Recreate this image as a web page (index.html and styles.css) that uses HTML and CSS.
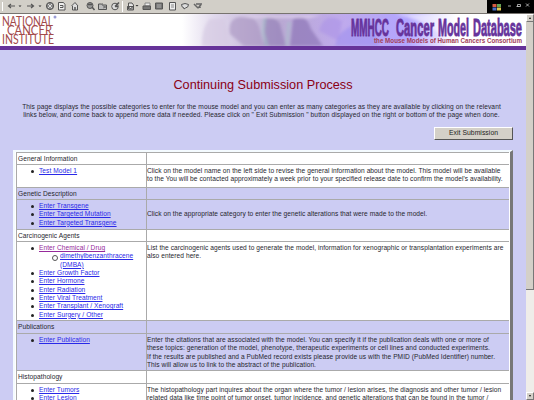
FILE: index.html
```html
<!DOCTYPE html>
<html lang="en">
<head>
<meta charset="utf-8">
<title>Continuing Submission Process</title>
<link rel="stylesheet" href="styles.css">
</head>
<body>
<div class="toolbar">
  <svg class="tools" width="210" height="13" viewBox="0 0 210 13" fill="none" stroke="#555" stroke-width="1">
    <path d="M2.500 2v9" stroke="#fff"/><path d="M15 6H8.500M11 4L8.500 6 11 8" stroke-width="1.200"/>
    <path d="M18.500 5.500h3L20 7zM38.500 5.500h3L40 7zM135.500 5h3L137 6.500z" fill="#333" stroke="none"/>
    <path d="M27 6h6.500M31 4l2.500 2L31 8" stroke-width="1.200"/>
    <circle cx="50" cy="6" r="3.600" fill="#888"/><path d="M48 4l4 4M52 4l-4 4" stroke="#ddd"/>
    <path d="M58.500 2.500h5l1.500 2V10h-6.500z" fill="#eee"/><path d="M60 5.500h3v2h-3"/>
    <path d="M71.500 6L75 2.500 78 6M72.500 6v4h5V6" fill="#ddd"/><path d="M75 10V7" stroke-width="1.500"/>
    <circle cx="90" cy="5.500" r="3" fill="#999"/><path d="M88 4.500h4M92 7l2.500 3" stroke-width="1.500"/>
    <path d="M98.500 4h3l1 1h4v4.500h-8z" fill="#bbb"/><path d="M102 3l1 3 3 1-3 1" stroke="#777"/>
    <circle cx="115" cy="6.500" r="3.300" fill="#ddd"/><path d="M115 6.500l4-4M115 6.500h3" stroke-width="1.600"/>
    <path d="M122.500 1v11" stroke="#fff"/>
    <path d="M128.500 3h3.500l1.500 2v4h-5zM127.500 6.500h6v3.500h-6z" fill="#e4e4e4"/><path d="M127.500 6.500l3 2 3-2"/>
    <path d="M145 3h5v3h-5z" fill="#eee" stroke="#888"/><path d="M143 6h7.500v3.500H143z" fill="#777"/>
    <path d="M155.500 3h7v6h-7z" fill="#777"/><path d="M157 5h4M157 7h4" stroke="#aaa"/>
    <path d="M169.500 2.500h6V10h-6z" fill="#eee"/><path d="M171 5h3M171 7h3" stroke="#888"/>
    <path d="M181.500 4.500q3.500-2 7 0 0 3-3 3.500l-1.500 1V8q-2.500-.5-2.500-3.500z" fill="#ddd"/>
    <path d="M194 4l4 4M196 4h6M198 8l3-3M200 5v3" stroke="#666" stroke-width="1.500"/>
  </svg>
  <svg class="window" width="47" height="13" viewBox="0 0 47 13" fill="none" stroke="#ccc">
    <path d="M5.500 4h4v3h-4z" fill="#d75c43" stroke="none"/><path d="M10 4h4v3h-4z" fill="#66a455" stroke="none"/>
    <path d="M5.500 7.500h4v3h-4z" fill="#4b70c8" stroke="none"/><path d="M10 7.500h4v3h-4z" fill="#e2c94f" stroke="none"/>
    <path d="M21 6h3M30.500 4.500h3v2h-3zM29.500 6.500h2M39 3.500l3 3M42 3.500l-3 3" stroke-width=".8"/>
  </svg>
</div>
<div class="view">
  <div class="page">
    <svg class="banner" width="526" height="32" viewBox="0 0 526 32">
      <defs>
        <linearGradient id="wash"><stop offset="0" stop-color="#fff"/><stop offset=".12" stop-color="#e0d8ec"/><stop offset=".35" stop-color="#b9a9d2"/><stop offset=".58" stop-color="#bfaaec"/><stop offset=".82" stop-color="#b2a5ff"/><stop offset="1" stop-color="#fff"/></linearGradient>
        <filter id="soft"><feGaussianBlur stdDeviation="1.8"/></filter>
      </defs>
      <path d="M0 0h526v32H0z" fill="#fff"/>
      <path d="M182 0h275v32H182z" fill="url(#wash)"/>
      <g filter="url(#soft)">
        <path d="M202 32q0-20 8-27h15l5 27z" fill="#d6cae2" opacity=".7"/>
        <path d="M230 20q-3-17 14-18 13 0 16 14l4 16h-20z" fill="#a792bf" opacity=".6"/>
        <path d="M264 4q10-3 16 6l6 22h-22z" fill="#8f79b4" opacity=".6"/>
        <path d="M290 32l3-27q13-7 18 10l12 17z" fill="#8b72b4" opacity=".65"/>
        <path d="M319 17q5-20 23-10l-3 20z" fill="#a890e8" opacity=".5"/>
        <path d="M265 3l-2 15 4 14M289 8l-2 24" fill="none" stroke="#a6c3c9" stroke-width="3" opacity=".6"/>
        <path d="M335 32q5-23 38-25l6 25z" fill="#9488f0" opacity=".45"/>
        <path d="M395 0h131v32h-80q-5-22-51-32z" fill="#fff" opacity=".5"/>
        <path d="M232 1h90L310 4h-60z" fill="#e4d7f1" opacity=".7"/>
      </g>
      <g class="nci" fill="#a34a4a">
        <text x="2" y="11.500" textLength="51" lengthAdjust="spacingAndGlyphs">NATIONAL</text>
        <text x="7" y="20.700" textLength="45" lengthAdjust="spacingAndGlyphs">CANCER</text>
        <text x="2" y="30" textLength="52" lengthAdjust="spacingAndGlyphs">INSTITUTE</text>
      </g>
      <circle cx="55" cy="3" r="1.500" fill="#9a9cd4"/>
      <g class="brand" fill="#66339b" stroke="#66339b">
        <text x="351" y="21.500" textLength="38" lengthAdjust="spacingAndGlyphs">MMHCC</text>
        <text x="396" y="21.500" textLength="38" lengthAdjust="spacingAndGlyphs">Cancer</text>
        <text x="438" y="21.500" textLength="31" lengthAdjust="spacingAndGlyphs">Model</text>
        <text x="473" y="21.500" textLength="49" lengthAdjust="spacingAndGlyphs">Database</text>
      </g>
      <text class="tag" x="374" y="29" textLength="148" lengthAdjust="spacingAndGlyphs">the Mouse Models of Human Cancers Consortium</text>
    </svg>
    <div class="rule"></div>
    <h1>Continuing Submission Process</h1>
    <p class="intro">This page displays the possible categories to enter for the mouse model and you can enter as many categories as they are available by clicking on the relevant<br>links below, and come back to append more data if needed. Please click on " Exit Submission " button displayed on the right or bottom of the page when done.</p>
    <div class="actions"><button>Exit Submission</button></div>
    <div class="table">
      <div class="row head"><div>General Information</div><div></div></div>
      <div class="row r1"><ul><li><a>Test Model 1</a></li></ul><div>Click on the model name on the left side to revise the general information about the model. This model will be available<br>to the You will be contacted approximately a week prior to your specified release date to confirm the model's availability.</div></div>
      <div class="row head tint"><div>Genetic Description</div><div></div></div>
      <div class="row r2 tint"><ul><li><a>Enter Transgene</a></li><li><a>Enter Targeted Mutation</a></li><li><a>Enter Targeted Transgene</a></li></ul><div class="mid">Click on the appropriate category to enter the genetic alterations that were made to the model.</div></div>
      <div class="row head"><div>Carcinogenic Agents</div><div></div></div>
      <div class="row r3"><ul><li><a class="visited">Enter Chemical / Drug</a><ul><li><a>dimethylbenzanthracene<br>(DMBA)</a></li></ul></li><li><a>Enter Growth Factor</a></li><li><a>Enter Hormone</a></li><li><a>Enter Radiation</a></li><li><a>Enter Viral Treatment</a></li><li><a>Enter Transplant / Xenograft</a></li><li><a>Enter Surgery / Other</a></li></ul><div>List the carcinogenic agents used to generate the model, information for xenographic or transplantation experiments are<br>also entered here.</div></div>
      <div class="row head tall tint"><div>Publications</div><div></div></div>
      <div class="row r4 tint"><ul><li><a>Enter Publication</a></li></ul><div>Enter the citations that are associated with the model. You can specify it if the publication deals with one or more of<br>these topics: generation of the model, phenotype, therapeutic experiments or cell lines and conducted experiments.<br>If the results are published and a PubMed record exists please provide us with the PMID (PubMed Identifier) number.<br>This will allow us to link to the abstract of the publication.</div></div>
      <div class="row head tall"><div>Histopathology</div><div></div></div>
      <div class="row r5"><ul><li><a>Enter Tumors</a></li><li><a>Enter Lesion</a></li></ul><div>The histopathology part inquires about the organ where the tumor / lesion arises, the diagnosis and other tumor / lesion<br>related data like time point of tumor onset, tumor incidence, and genetic alterations that can be found in the tumor /</div></div>
    </div>
  </div>
  <div class="scroll"><div class="btn up"></div><div class="thumb"></div><div class="btn down"></div></div>
</div>
</body>
</html>
```
FILE: styles.css
```css
* { box-sizing: border-box; }
body { margin: 0; width: 534px; height: 400px; overflow: hidden; background: #ccccf3; color: #26262e; font: 6.6px/8.33px "Liberation Sans", Arial, sans-serif; letter-spacing: .06px; }
.toolbar { display: flex; justify-content: space-between; height: 14px; background: #d2cfc8; border-bottom: 1px solid #77736f; }
.window { background: #000; }
svg { display: block; letter-spacing: 0; }
.view { display: flex; height: 386px; }
.page { width: 526px; overflow: hidden; white-space: nowrap; }
.rule { height: 4px; background: #663399; }
.nci { font: 400 12.6px Lato, sans-serif; }
.brand { font: bold 24.5px "Liberation Sans Narrow", "Liberation Sans", sans-serif; stroke-width: .9; }
.tag { font: bold 6.5px "Liberation Sans", sans-serif; fill: #a33d58; }
h1 { margin: 27px 0 0; height: 16px; font-size: 12.7px; line-height: 16px; letter-spacing: 0; font-weight: 400; color: #8b0014; text-align: center; }
.intro { margin: 10px 0 0; padding-right: 3px; text-align: center; letter-spacing: .095px; }
.actions { display: flex; justify-content: flex-end; margin-top: 7px; padding-right: 13px; }
button { width: 79px; height: 13px; padding: 0; font: 6.8px/10px "Liberation Sans", sans-serif; letter-spacing: .05px; color: #222; background: #d4d0c8; border: 1px solid; border-color: #fff #555 #555 #fff; }
.table { width: 500px; height: 270px; margin: 10px 0 0 13px; background: #fff; border: 2px solid #f4fbff; border-right: 3px solid #777; }
.row { display: grid; grid-template-columns: 130px 1fr; border-top: 1px solid #aaa; margin-left: 1px; margin-right: 1px; }
.row > * { padding-left: 2px; padding-top: 2.4px; }
.row > :last-child { padding-left: 0; border-left: 1px solid #aaa; }
.row > .mid { padding-top: 10.6px; }
.row > :first-child { border-left: 1px solid #aaa; padding-left: 1px; }
.head { height: 12px; }
.head > :first-child { padding-top: 2px; }
.tall { height: 13px; }
.tint { background: #ccccf3; }
.r1 { height: 23px; }
.r2 { height: 30px; }
.r3 { height: 79px; }
.r4 { height: 37px; }
.r5 { height: 40px; }
ul { margin: 0; list-style: none; }
.row > ul:first-child { padding-left: 22px; padding-top: 2.4px; }
li ul { padding-left: 21px; }
li { position: relative; }
li::before { content: ""; position: absolute; left: -8px; top: 3px; width: 3px; height: 3px; border-radius: 50%; background: #222; }
li li::before { width: 4px; height: 4px; border: 1px solid #555; background: transparent; }
a { color: #2929e8; text-decoration: underline; text-decoration-thickness: 1px; text-underline-offset: .5px; }
.visited { color: #962a9b; }
.scroll { width: 8px; display: flex; flex-direction: column; background: #efede9; }
.thumb { height: 268px; background: #d4d0c8; border-right: 1px solid #777; border-bottom: 1px solid #777; margin-bottom: auto; }
.btn { height: 8px; background: #d4d0c8; border: 1px solid; border-color: #fff #777 #777 #fff; display: grid; place-items: center; }
.btn::before { content: ""; border: 1.5px solid transparent; }
.up::before { border-top: 0; border-bottom: 2px solid #111; }
.down::before { border-bottom: 0; border-top: 2px solid #111; }
```
